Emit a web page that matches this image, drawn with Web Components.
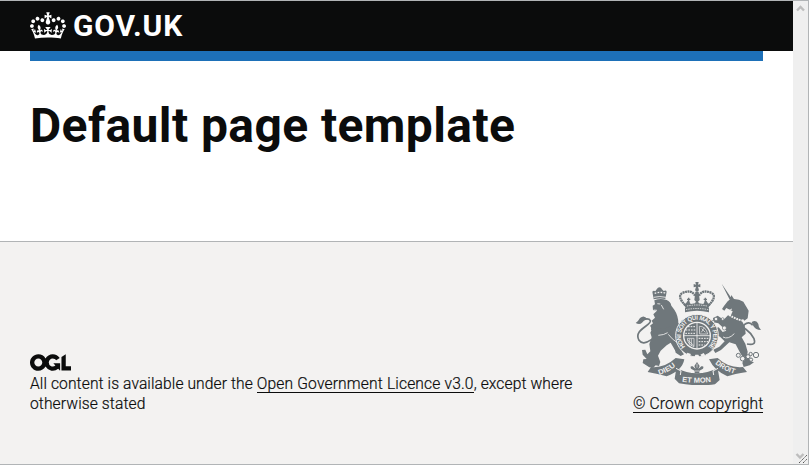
<!DOCTYPE html>
<html lang="en">
<head>
<meta charset="utf-8">
<title>Default page template</title>
<style>
html,body{margin:0;height:100%;overflow:hidden}
body{background:#fff;color:#0b0c0c;font-family:Roboto,sans-serif}
</style>
</head>
<body>
<page-frame>
  <site-header>GOV.UK</site-header>
  <page-title>Default page template</page-title>
  <site-footer></site-footer>
</page-frame>
<script>
const define = (name, html) => {
  const t = document.createElement('template');
  t.innerHTML = html;
  customElements.define(name, class extends HTMLElement {
    constructor() {
      super();
      this.attachShadow({mode: 'open'}).appendChild(t.content.cloneNode(true));
    }
  });
};

define('scroll-rail', `
<style>
:host{display:flex;flex-direction:column;justify-content:space-between;width:15px;background:#efefef;flex:none}
svg{display:block}
</style>
<svg width="15" height="14" viewBox="0 0 15 14"><path d="M4 9.5 7.5 6 11 9.5" fill="none" stroke="#bdbdbd" stroke-width="2.4"/></svg>
<svg width="15" height="14" viewBox="0 0 15 14"><path d="M3.5 4 7 7.5 10.5 4" fill="none" stroke="#bdbdbd" stroke-width="2.4"/><path d="M6 13 14 5M10 13l4-4" fill="none" stroke="#555" stroke-width="1" stroke-dasharray="1.41 .6"/></svg>
`);

define('page-frame', `
<style>
:host{display:flex;box-sizing:border-box;height:465px;border:1px solid #b1b4b6;border-left:0}
main{flex:1;min-width:0;display:flex;flex-direction:column}
</style>
<main><slot></slot></main><scroll-rail></scroll-rail>
`);

define('crown-mark', `
<style>:host{display:block}svg{display:block}</style>
<svg width="36" height="27" viewBox="0 0 132 97" fill="#fff"><path fill-rule="evenodd" d="M25 30.2c3.5 1.5 7.7-.2 9.1-3.7 1.5-3.6-.2-7.8-3.9-9.2-3.6-1.4-7.6.3-9.1 3.9-1.4 3.5.3 7.5 3.9 9zM9 39.5c3.6 1.5 7.8-.2 9.2-3.7 1.5-3.6-.2-7.8-3.9-9.1-3.6-1.5-7.6.2-9.1 3.8-1.4 3.5.3 7.5 3.8 9zM4.4 57.2c3.5 1.5 7.7-.2 9.1-3.8 1.5-3.6-.2-7.7-3.9-9.1-3.5-1.5-7.6.3-9.1 3.8-1.4 3.5.3 7.6 3.9 9.1zm38.3-21.4c3.5 1.5 7.7-.2 9.1-3.8 1.5-3.6-.2-7.7-3.9-9.1-3.6-1.5-7.6.3-9.1 3.8-1.3 3.6.4 7.7 3.9 9.1zm64.4-5.6c-3.6 1.5-7.8-.2-9.1-3.7-1.5-3.6.2-7.8 3.8-9.2 3.6-1.4 7.7.3 9.2 3.9 1.3 3.5-.4 7.5-3.9 9zm15.9 9.3c-3.6 1.5-7.7-.2-9.1-3.7-1.5-3.6.2-7.8 3.7-9.1 3.6-1.5 7.7.2 9.2 3.8 1.5 3.5-.3 7.5-3.8 9zm4.7 17.7c-3.6 1.5-7.8-.2-9.2-3.8-1.5-3.6.2-7.7 3.9-9.1 3.6-1.5 7.7.3 9.2 3.8 1.3 3.5-.4 7.6-3.9 9.1zM89.3 35.8c-3.6 1.5-7.8-.2-9.2-3.8-1.4-3.6.2-7.7 3.9-9.1 3.6-1.5 7.7.3 9.2 3.8 1.4 3.6-.3 7.7-3.9 9.1zM69.7 17.7l8.9 4.7V9.3l-8.9 2.8c-.2-.3-.5-.6-.9-.9L72.4 0H59.6l3.5 11.2c-.3.3-.6.5-.9.9l-8.8-2.8v13.1l8.8-4.7c.3.3.6.7.9.9l-5 15.4v.1c-.2.8-.4 1.6-.4 2.4 0 4.1 3.1 7.5 7 8.1h.2c.3 0 .7.1 1 .1.4 0 .7 0 1-.1h.2c4-.6 7.1-4.1 7.1-8.1 0-.8-.1-1.7-.4-2.4V34l-5.1-15.4c.4-.2.7-.6 1-.9zM66 92.8c16.9 0 32.8 1.1 47.1 3.2 4-16.9 8.9-26.7 14-33.5l-9.6-3.4c1 4.9 1.1 7.2 0 10.2-1.5-1.4-3-4.3-4.2-8.7L108.6 76c2.8-2 5-3.2 7.5-3.3-4.4 9.4-10 11.9-13.6 11.2-4.3-.8-6.3-4.6-5.6-7.9 1-4.7 5.7-5.9 8-.5 4.3-8.7-3-11.4-7.6-8.8 7.1-7.2 7.9-13.5 2.1-21.1-8 6.1-8.1 12.3-4.5 20.8-4.7-5.4-12.1-2.5-9.5 6.2 3.4-5.2 7.9-2 7.2 3.1-.6 4.3-6.4 7.8-13.5 7.2-10.3-.9-10.9-8-11.2-13.8 2.5-.5 7.1 1.8 11 7.3L80.2 60c-4.1 4.4-8 5.3-12.3 5.4 1.4-4.4 8-11.6 8-11.6H55.5s6.4 7.2 7.9 11.6c-4.2-.1-8-1-12.3-5.4l1.4 16.4c3.9-5.5 8.5-7.7 10.9-7.3-.3 5.8-.9 12.8-11.1 13.8-7.2.6-12.9-2.9-13.5-7.2-.7-5 3.8-8.3 7.1-3.1 2.7-8.7-4.6-11.6-9.4-6.2 3.7-8.5 3.6-14.7-4.6-20.8-5.8 7.6-5 13.9 2.2 21.1-4.7-2.6-11.9.1-7.7 8.8 2.3-5.5 7.1-4.2 8.1.5.7 3.3-1.3 7.1-5.7 7.9-3.5.7-9-1.8-13.5-11.2 2.5.1 4.7 1.3 7.5 3.3l-4.7-15.4c-1.2 4.4-2.7 7.2-4.3 8.7-1.1-3-.9-5.3 0-10.2l-9.5 3.4c5 6.9 9.9 16.7 14 33.5 14.8-2.1 30.8-3.2 47.7-3.2z"/></svg>
`);

define('site-header', `
<style>
:host{display:block;height:60px;flex:none;background:linear-gradient(#0b0c0c 50px,transparent 50px)}
.bar{display:flex;gap:7px;height:50px;padding:0 30px;box-sizing:border-box}
crown-mark{margin-top:11px}
.name{color:#fff;font:700 30px/50px Roboto,sans-serif;letter-spacing:.9px}
.stripe{height:10px;margin:0 30px;background:#1d70b8}
</style>
<div class="bar"><crown-mark></crown-mark><span class="name"><slot></slot></span></div>
<div class="stripe"></div>
`);

define('page-title', `
<style>
:host{display:block;flex:none;height:180px;box-sizing:border-box;padding:40px 30px 0}
h1{margin:0;font:700 48px/50px Roboto,sans-serif;letter-spacing:.4px;white-space:nowrap}
</style>
<h1><slot></slot></h1>
`);

define('ogl-mark', `
<style>:host{display:block}svg{display:block}</style>
<svg width="41" height="17" viewBox="0 0 483.2 195.7" fill="#0b0c0c"><path d="M421.5 142.8V.1l-50.7 32.3v161.1h112.4v-50.7zm-122.3-9.6A47.12 47.12 0 0 1 221 97.8c0-26 21.1-47.1 47.1-47.1 16.7 0 31.4 8.7 39.7 21.8l42.7-27.2A97.63 97.63 0 0 0 268.1 0c-36.5 0-68.3 20.1-85.1 49.7A98 98 0 0 0 97.8 0C43.9 0 0 43.9 0 97.8s43.9 97.8 97.8 97.8c36.5 0 68.3-20.1 85.1-49.7a97.76 97.76 0 0 0 149.6 25.4l19.4 22.2h3v-87.8h-80l24.3 27.5zM97.8 145c-26 0-47.1-21.1-47.1-47.1s21.1-47.1 47.1-47.1 47.1 21.1 47.1 47.1S123.8 145 97.8 145"/></svg>
`);

define('royal-arms', `
<style>:host{display:block}svg{display:block}text{font-family:"Liberation Sans",sans-serif;font-weight:700}</style>
<svg width="126" height="104" viewBox="12 18 378 312">
<defs>
<path id="garter" d="M157 219A55 55 0 1 1 239 219"/>
<path id="dieu" d="M85 300Q116 291 142 266"/>
<path id="mon" d="M153 320Q198 327 246 320"/>
<path id="droit" d="M252 266Q282 291 322 300"/>
</defs>
<g fill="#6f777b" stroke="none">
<!-- lion -->
<path d="M68 73 64 50q4-5 9-1l4-6q4-6 8-6 6 0 8 6l5 5q7-4 9 2l-4 22Q86 68 68 73z"/>
<path d="M70 76Q88 69 107 75 119 80 121 92L130 104Q142 122 142 145L150 150 138 177 145 196 155 222 148 236 133 227 119 203 107 211 89 227 81 242 88 261 84 273 74 271 67 278 55 277 35 264 37 253 47 252 35 239 33 225 43 224 49 238 58 229 55 207 62 187 58 173 63 162 57 152 66 145 62 137 72 128 67 118 77 108 66 105 65 92 72 88z"/>
<path d="M120 153Q96 166 71 158L61 154 60 165 68 169 66 178 81 181Q101 181 119 170zM119 180 108 193 128 207 134 233 149 243 159 238 143 217z"/>
<!-- unicorn -->
<path d="M272 26 303 72 297 76zM286 99 280 107 273 102 279 93 290 79 298 73 301 60 309 72Q325 72 337 80L345 94 353 107 350 130 340 137 336 132 333 137 298 125 305 109z"/>
<path d="M291 121 333 138 342 156 344 176 332 187 343 206 350 230 348 245 359 259 369 262 356 271 338 276 334 264 339 252 328 235 314 208 295 202 270 225 253 234 247 224 265 215 281 199 267 185 253 179 245 163 263 157 275 171 286 167 262 145 247 142 246 129 260 122 278 134z"/>
<!-- scrolls -->
<path d="M60 276Q100 280 134 249L160 253Q154 287 107 304 83 297 50 291zM136 280Q198 310 260 280L266 315 252 328Q198 335 144 325L131 311zM234 253 260 249Q292 280 336 276L348 291Q309 297 289 304 250 287 234 253z"/>
</g>
<!-- tails -->
<g fill="none" stroke="#6f777b" stroke-width="5">
<path d="M61 194Q35 212 24 196C6 164 62 151 58 137Q54 129 39 133"/>
<path d="M348 207Q377 213 369 191C353 158 330 163 340 149Q354 137 365 151"/>
</g>
<path fill="#6f777b" d="M14 144Q21 140 27 129 39 118 49 132 38 136 33 143 26 151 14 144zM362 141q14-9 20 6 0 11 8 18-18 0-25-16z"/>
<!-- lion and unicorn highlights -->
<g fill="none" stroke="#f3f2f1" stroke-width="2.5">
<path d="M79 86l9 1M91 90l7 13M68 105l10 1M112 178q10 14 28 26M82 181q17-1 28-8M276 186q15 9 34-10M287 105q8 3 16-3"/>
<path stroke-width="6" stroke-dasharray="5 3" d="M295 120Q312 132 336 137"/>
<path stroke-width="4" stroke-dasharray="5 4" d="M71 55q15-5 32-1"/>
<path d="M68 67q18-5 37 0"/>
</g>
<!-- chain -->
<g fill="#f3f2f1" stroke="#6f777b" stroke-width="3"><circle cx="322" cy="241" r="6"/><circle cx="335" cy="251" r="7"/><circle cx="351" cy="245" r="6"/><circle cx="359" cy="237" r="5"/><circle cx="360" cy="254" r="5"/><circle cx="375" cy="240" r="8"/></g>
<g fill="#f3f2f1" stroke="#6f777b" stroke-width="2"><circle cx="255" cy="132" r="5"/><circle cx="246" cy="140" r="4"/><circle cx="275" cy="132" r="4"/><circle cx="280" cy="159" r="6"/></g>
<!-- royal crown -->
<path fill="#6f777b" d="M193 21h10l-2 8 7-2v10l-7-2 3 11-6 5-6-5 3-11-7 2V27l7 2z"/>
<path fill="none" stroke="#6f777b" stroke-width="7" stroke-dasharray="6 1.5" d="M163 91Q137 64 154 54 181 42 192 62M233 91Q259 64 242 54 215 42 204 62"/>
<path fill="#6f777b" d="M193 50h10l3 25-8 8-8-8zM156 84l8 2 8-12 7 13 13-2 6-11 6 11 13 2 7-13 8 12 8-2-8 14q-34-9-68 0zM162 98q36-9 72 0v14q-36-9-72 0z"/>
<path fill="none" stroke="#6f777b" stroke-width="4" d="M168 73h10M173 68v13M218 73h10M223 68v13"/>
<path stroke="#f3f2f1" stroke-width="2.5" stroke-dasharray="4 3" fill="none" d="M165 104q33-7 67 0M168 93q30-6 60 0"/>
<!-- garter -->
<circle cx="198" cy="182" r="64" fill="#6f777b" stroke="#f3f2f1" stroke-width="3"/>
<circle cx="198" cy="182" r="42" fill="#f3f2f1"/>
<circle cx="198" cy="182" r="38" fill="#6f777b"/>
<text font-size="19" fill="#f3f2f1" dy="7" textLength="255" lengthAdjust="spacingAndGlyphs"><textPath href="#garter">HONI SOIT QUI MAL Y PENSE</textPath></text>
<!-- quartered shield -->
<path fill="none" stroke="#f3f2f1" stroke-width="2.5" d="M198 143v78M159 182h78"/>
<g fill="none" stroke="#f3f2f1" stroke-width="3" stroke-dasharray="5 3"><path d="M171 155h23M164 165h30M163 175h31M203 190h29M203 200h28M203 210h18"/></g>
<path fill="none" stroke="#f3f2f1" stroke-width="2" d="M205 154q19-1 25 23h-24zM212 161l11 11M211 172l9-14M169 190q0 18 20 25V190zM175 191v18M181 191v22M169 194l20 18"/>
<path fill="#f3f2f1" d="m169 233 11 4-4 7-9-5zm39 6 10-5 4 6-9 5zm-15 0 9 0 4 8-8 6-8-6z"/>
<!-- plant badge above the motto -->
<path fill="#f3f2f1" d="M180 256h36v38h-36z"/>
<path fill="#6f777b" d="M198 261l8 12-4 9 9-8q9-2 5 7l-11 6v8h-14v-8l-11-6q-4-9 5-7l9 8-4-9z"/>
<path d="M192 288h12M198 266v12" stroke="#f3f2f1" stroke-width="2"/>
<path d="M135 280l15 8-2 12M261 280l-15 8 2 12" fill="none" stroke="#f3f2f1" stroke-width="3"/>
<g fill="#f3f2f1" font-size="22"><text textLength="56" lengthAdjust="spacingAndGlyphs"><textPath href="#dieu">DIEU</textPath></text><text textLength="88" lengthAdjust="spacingAndGlyphs"><textPath href="#mon">ET MON</textPath></text><text textLength="66" lengthAdjust="spacingAndGlyphs"><textPath href="#droit">DROIT</textPath></text></g>
</svg>
`);

define('site-footer', `
<style>
:host{display:flex;flex:1;box-sizing:border-box;border-top:1px solid #b1b4b6;background:#f3f2f1;padding:39px 30px 0;justify-content:space-between;font:300 15.6px/20px Roboto,sans-serif;-webkit-text-stroke:.2px #0b0c0c}
.licence{width:560px;margin-top:73px;letter-spacing:.1px}
p{margin:3px 0 0}
a{color:#0b0c0c;box-shadow:0 1px #0b0c0c;display:inline-block;height:18px;line-height:20px}
.licence a{letter-spacing:.16px}
.crown{width:130px;white-space:nowrap;letter-spacing:.13px}
royal-arms{margin-left:2px;margin-bottom:9px;-webkit-text-stroke:0}
</style>
<div class="licence"><ogl-mark></ogl-mark><p>All content is available under the <a>Open Government Licence v3.0</a>, except where<br>otherwise stated</p></div>
<div class="crown"><royal-arms></royal-arms><a>© Crown copyright</a></div>
`);
</script>
</body>
</html>
